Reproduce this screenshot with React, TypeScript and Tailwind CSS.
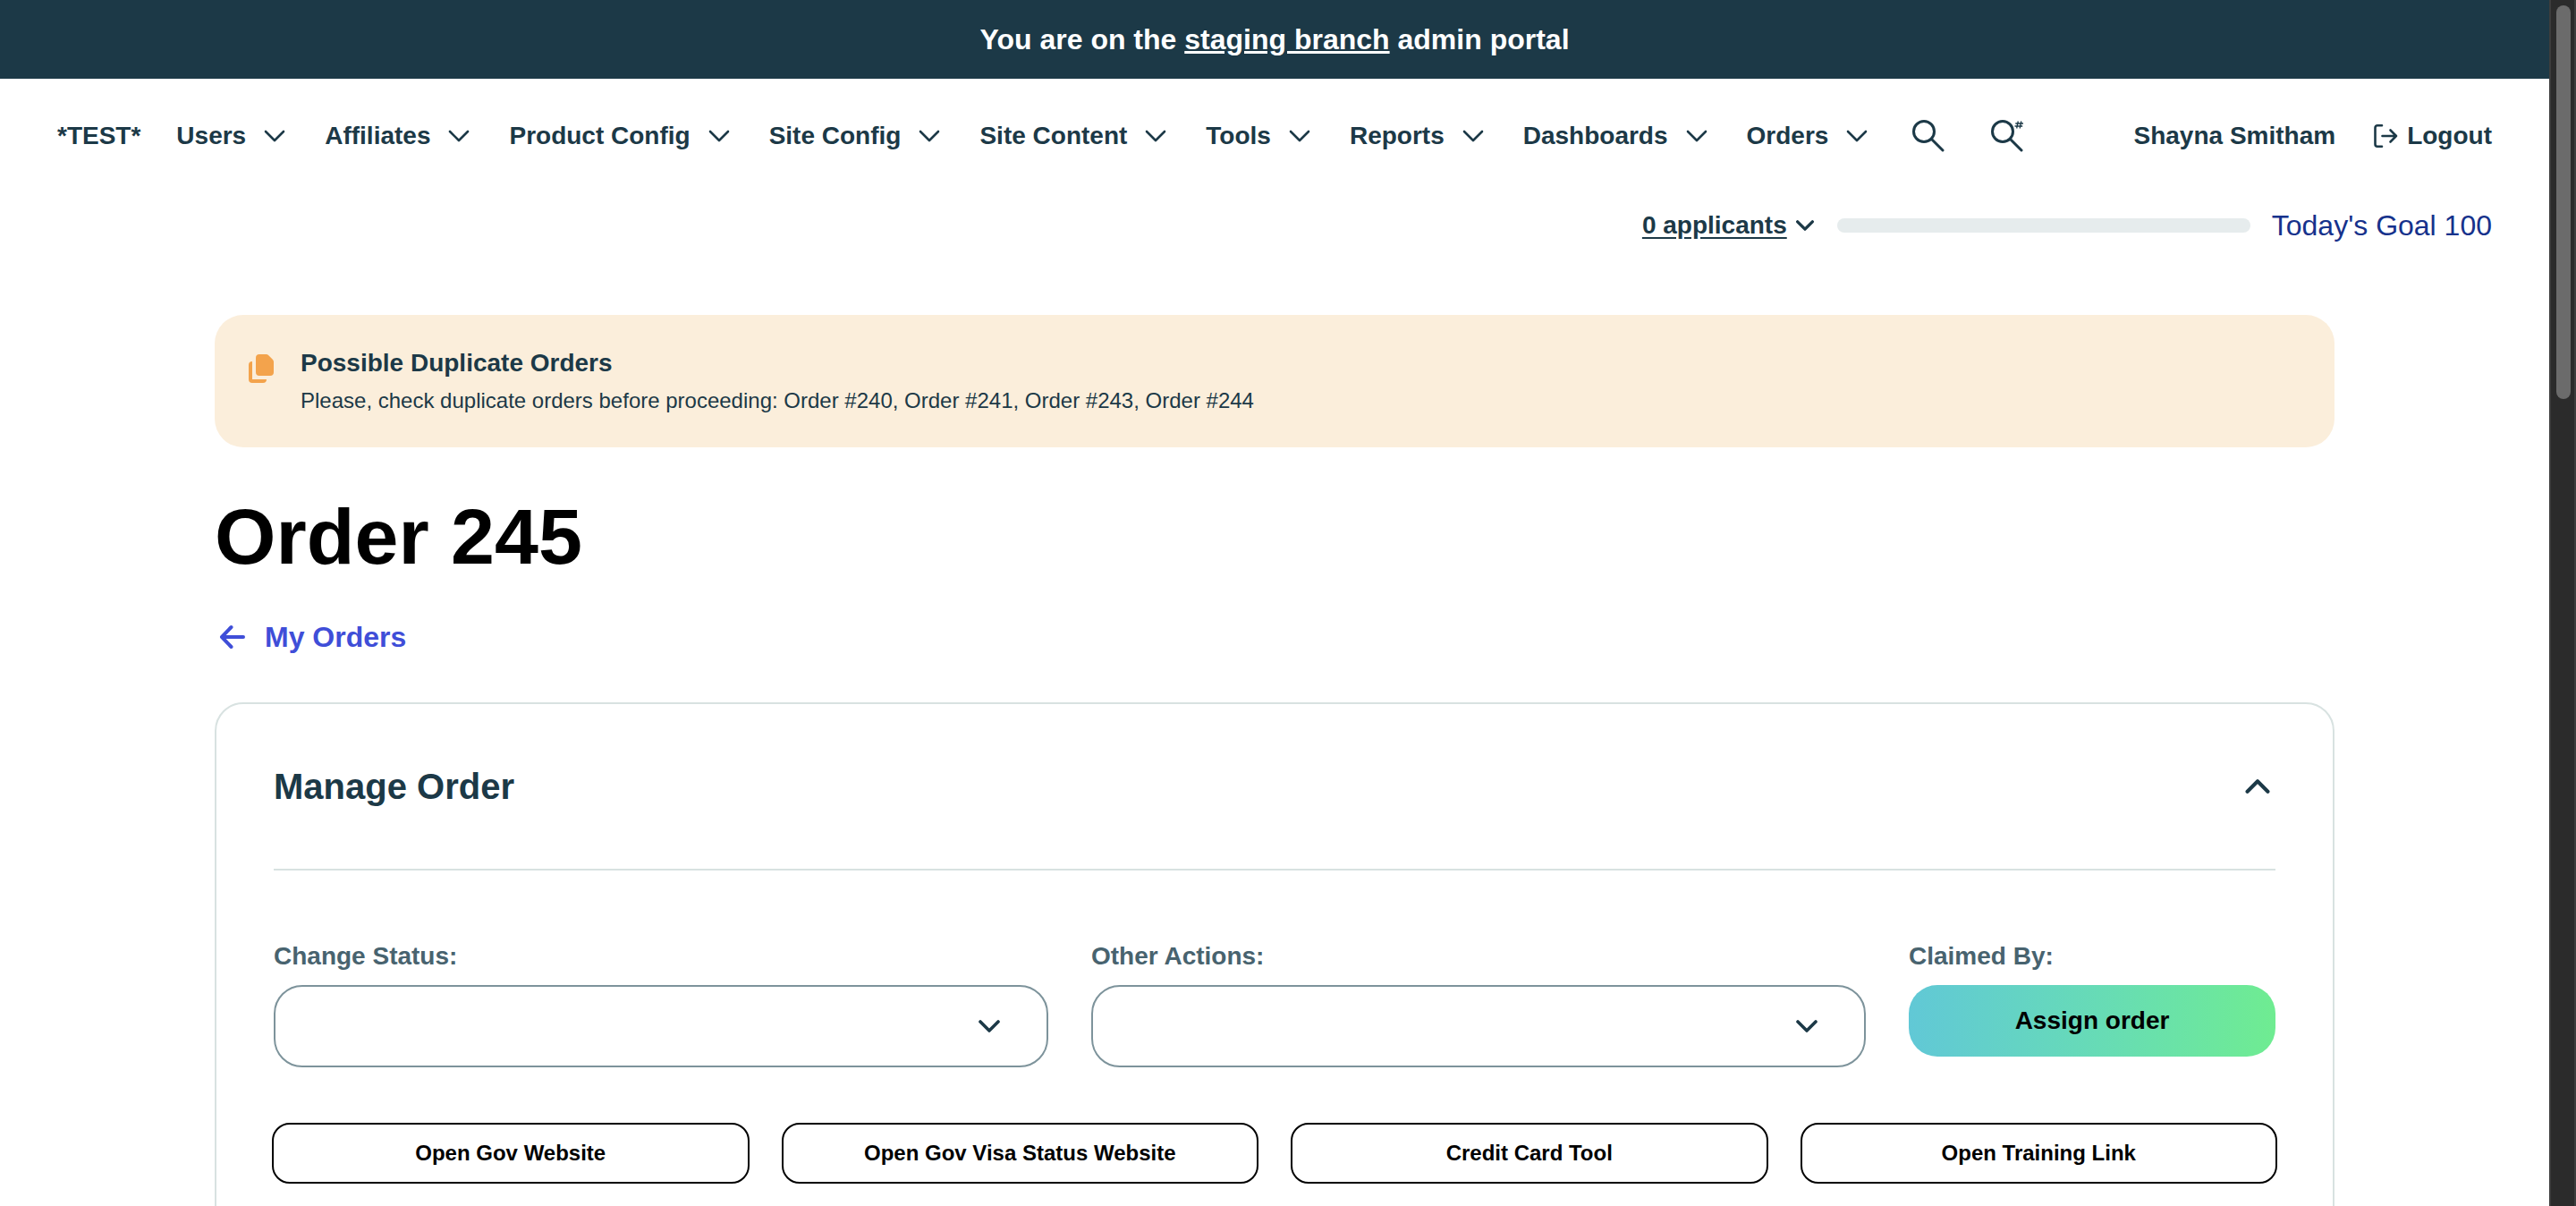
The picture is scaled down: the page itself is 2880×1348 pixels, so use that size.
import React from "react";

const navItems = ["Users", "Affiliates", "Product Config", "Site Config", "Site Content", "Tools", "Reports", "Dashboards", "Orders"];
const links = ["Open Gov Website", "Open Gov Visa Status Website", "Credit Card Tool", "Open Training Link"];

function Chevron({ className, width = 2.6 }: { className: string; width?: number }) {
  return (
    <svg viewBox="0 0 24 14" fill="none" stroke="currentColor" strokeWidth={width} strokeLinecap="round" strokeLinejoin="round" className={className} aria-hidden="true">
      <path d="M2 2l10 10L22 2" />
    </svg>
  );
}

function SearchIcon({ hash = false }: { hash?: boolean }) {
  return (
    <svg viewBox="0 0 44 36" fill="none" stroke="currentColor" strokeWidth="3" strokeLinecap="round" className="h-9 w-11" aria-hidden="true">
      <circle cx="19" cy="13" r="11.5" />
      <path d="M27.5 21.500L40 34" />
      {hash && <path strokeWidth="1.3" strokeLinecap="butt" d="M36.300 1.500l-1.600 8M39.800 1.500l-1.600 8M33.300 4h8.700M32.500 7h8.700" />}
    </svg>
  );
}

function Field({ id, label }: { id: string; label: string }) {
  return (
    <div className="flex min-w-0 flex-col gap-3">
      <label htmlFor={id} className="text-[28px] leading-10 font-bold text-[#48636f]">{label}</label>
      <div className="relative">
        <select id={id} className="h-[92px] w-full appearance-none rounded-[32px] border-2 border-[#7d939b] bg-white px-8 text-[28px]">
          <option value=""></option>
        </select>
        <Chevron width={3.6} className="pointer-events-none absolute top-1/2 right-[54px] h-[14px] w-6 -translate-y-1/2" />
      </div>
    </div>
  );
}

export default function App() {
  return (
    <div className="flex h-screen overflow-hidden bg-white font-['Liberation_Sans',Arial,sans-serif] text-[#1c3947]">
      <div className="min-w-0 flex-1 overflow-hidden">
        <div className="flex h-[88px] items-center justify-center bg-[#1c3947] text-[32px] font-bold text-white">
          <p>You are on the <span className="underline">staging branch</span> admin portal</p>
        </div>

        <header className="px-16 text-[28px] leading-8 font-bold">
          <div className="flex h-32 items-center justify-between">
            <div className="flex items-center gap-10">
              <a href="#" className="whitespace-nowrap">*TEST*</a>
              <nav className="flex items-center gap-11">
                {navItems.map((item) => (
                  <button key={item} type="button" className="flex items-center gap-5 font-bold whitespace-nowrap">
                    {item}
                    <Chevron className="h-[14px] w-6" />
                  </button>
                ))}
                <button type="button" aria-label="Search"><SearchIcon /></button>
                <button type="button" aria-label="Search by number"><SearchIcon hash /></button>
              </nav>
            </div>
            <div className="flex items-center gap-10 whitespace-nowrap">
              <span>Shayna Smitham</span>
              <a href="#" className="flex items-center gap-2">
                <svg viewBox="0 0 32 28" fill="none" stroke="currentColor" strokeWidth="2.6" strokeLinecap="round" strokeLinejoin="round" className="h-7 w-8" aria-hidden="true">
                  <path d="M12 2.300H7a2.500 2.500 0 0 0-2.500 2.500v18.400a2.500 2.500 0 0 0 2.500 2.500h5M12.500 14h15.500M21.500 7.500l6.500 6.500-6.500 6.500" />
                </svg>
                Logout
              </a>
            </div>
          </div>
          <div className="flex h-[72px] items-center justify-end">
            <button type="button" className="flex items-center gap-[10px] font-bold">
              <span className="underline underline-offset-4">0 applicants</span>
              <Chevron width={4} className="h-3 w-5" />
            </button>
            <div role="progressbar" aria-label="Applicants today" aria-valuenow={0} aria-valuemin={0} aria-valuemax={100} className="mr-6 ml-[26px] h-4 w-[462px] rounded-full bg-[#e6eced]" />
            <span className="text-[32px] font-normal text-[#16328c]">Today's Goal 100</span>
          </div>
        </header>

        <main className="px-60 pt-16">
          <section className="flex h-[148px] gap-[30px] rounded-[32px] bg-[#fbeedb] px-[38px] pt-9">
            <svg viewBox="0 0 28 32" fill="#f3a34c" className="mt-2 h-8 w-7 shrink-0" aria-hidden="true">
              <path d="M12 0h7.500a4 4 0 0 1 2.800 1.200l4.500 4.500A4 4 0 0 1 28 8.500V20a4 4 0 0 1-4 4H12a4 4 0 0 1-4-4V4a4 4 0 0 1 4-4z" />
              <path d="M4 8v20h16a4 4 0 0 1-4 4H4a4 4 0 0 1-4-4V12a4 4 0 0 1 4-4z" />
            </svg>
            <div>
              <h2 className="text-[28px] leading-9 font-bold">Possible Duplicate Orders</h2>
              <p className="mt-2 text-2xl">Please, check duplicate orders before proceeding: Order #240, Order #241, Order #243, Order #244</p>
            </div>
          </section>

          <h1 className="mt-12 text-[88px] leading-[104px] font-bold text-black">Order 245</h1>
          <a href="#" className="mt-9 flex w-fit items-center gap-5 text-[32px] leading-12 font-bold text-[#3f4ed8]">
            <svg viewBox="0 0 36 28" fill="none" stroke="currentColor" strokeWidth="4" strokeLinecap="round" strokeLinejoin="round" className="h-7 w-9" aria-hidden="true">
              <path d="M32 14H8.500M18.500 3L8 14l10.500 11" />
            </svg>
            My Orders
          </a>

          <section className="mt-[49px] rounded-[32px] border-2 border-[#d8e2e1] px-16 pb-16">
            <div className="flex h-[186px] items-center justify-between border-b-2 border-[#d8e2e1]">
              <h2 className="text-[40px] font-bold">Manage Order</h2>
              <button type="button" aria-label="Collapse" className="pr-[6px]">
                <Chevron width={3.6} className="h-4 w-7 rotate-180" />
              </button>
            </div>
            <div className="mt-[76px] grid grid-cols-[866fr_866fr_410fr] gap-12">
              <Field id="status" label="Change Status:" />
              <Field id="actions" label="Other Actions:" />
              <div className="flex min-w-0 flex-col gap-3">
                <p className="text-[28px] leading-10 font-bold text-[#48636f]">Claimed By:</p>
                <button type="button" className="h-20 rounded-[32px] bg-linear-to-r from-[#61c8d6] to-[#6fec91] text-[28px] font-bold text-black">Assign order</button>
              </div>
            </div>
            <div className="-mx-[2px] mt-[62px] grid grid-cols-4 gap-9 text-2xl text-black">
              {links.map((link) => (
                <button key={link} type="button" className="h-[68px] rounded-[20px] border-2 border-black font-bold">{link}</button>
              ))}
            </div>
          </section>
        </main>
      </div>

      <div className="w-[30px] shrink-0 border-x-2 border-[#3d3d3d] bg-[#2b2b2b] pt-[6px] pr-1 pl-[6px]" aria-hidden="true">
        <div className="h-[440px] rounded-full bg-[#6b6b6b]" />
      </div>
    </div>
  );
}
